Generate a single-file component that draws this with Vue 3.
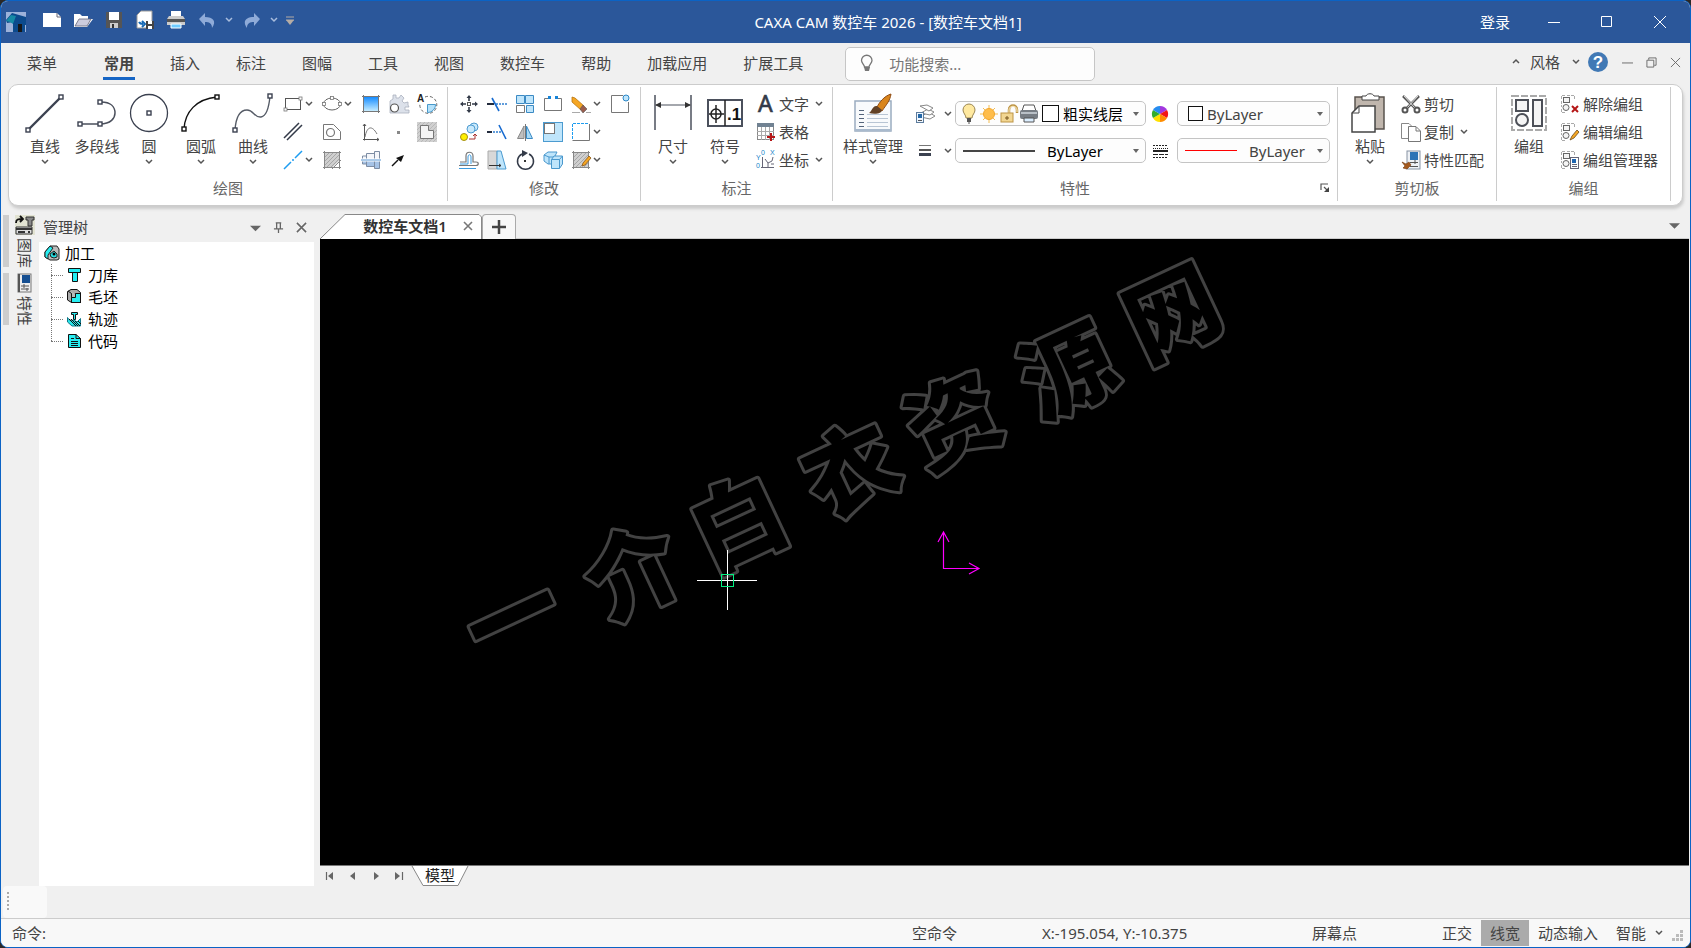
<script setup>
import { ref } from 'vue'

const activeTab = ref('常用')
const tabs = ['常用', '插入', '标注', '图幅', '工具', '视图', '数控车', '帮助', '加载应用', '扩展工具']
const search = ref('')

const dark = '#3b4150'
const sq = (x, y, c = dark) => `<rect x="${x - 2}" y="${y - 2}" width="4" height="4" fill="#fff" stroke="${c}" stroke-width="1.4"/>`

const groupFrame = `<path d="M5 1.500H1.500V5M7 1.500H13M1.500 7V13M1.500 15V18.500H5M11 1.500H14.500V5" fill="none" stroke="#aaa" stroke-dasharray="3 1"/><rect x="3.500" y="3.500" width="6" height="5" fill="#f4f4f4" stroke="#666"/><circle cx="6" cy="13.500" r="3" fill="#f4f4f4" stroke="#666"/>`
const hatch = `<rect x="3" y="3" width="14" height="14" fill="#cfcfcf"/><path d="M3 7L7 3M3 11L11 3M3 15L15 3M5 17L17 5M9 17L17 9M13 17L17 13" stroke="#a6a6a6"/><path d="M2.500 1V19M17.500 1V19M1 2.500H19M1 17.500H19" stroke="#888" fill="none"/>`

const icons = {
  line: `<path d="M3 37L36 4" stroke="${dark}" stroke-width="2.400"/>${sq(3, 37)}${sq(36, 4)}`,
  polyline: `<path d="M3 31H23C34 31 38 25 38 20C38 14 34 9 24 9" fill="none" stroke="#4b505c" stroke-width="1.500"/>${sq(3, 31)}${sq(23, 31)}${sq(23, 9)}`,
  circle: `<circle cx="20" cy="20" r="18.500" fill="none" stroke="${dark}" stroke-width="1.300"/>${sq(20, 20)}`,
  arc: `<path d="M3 36C4 19 15 6 36 4" fill="none" stroke="#111" stroke-width="1.400"/>${sq(3, 36, '#111')}${sq(36, 4, '#111')}`,
  curve: `<path d="M2 37C3 23 8 17 14 17C21 17 21 25 28 24C34 23 36 14 37 3" fill="none" stroke="#555b66" stroke-width="1.400"/>${sq(2, 37)}${sq(37, 3)}`,
  rect: `<rect x="2.500" y="4.500" width="15" height="11" fill="none" stroke="#555"/><rect x="1" y="14" width="3" height="3" fill="#fff" stroke="#777" stroke-width=".8"/><rect x="16" y="3" width="3" height="3" fill="#fff" stroke="#777" stroke-width=".8"/>`,
  parallel: `<path d="M1 16L16 1M4 18L19 3" stroke="#333a48" stroke-width="1.500"/>`,
  center: `<path d="M1 19L8 12M12 8L19 1" stroke="#1e9df0" stroke-width="1.500"/><circle cx="10" cy="10" r="1" fill="#1e9df0"/>`,
  ellipse: `<ellipse cx="10" cy="10" rx="8.500" ry="6" fill="none" stroke="#666"/><g fill="#fff" stroke="#777" stroke-width=".8"><rect x="8.500" y="2.500" width="3" height="3"/><rect x=".5" y="8.500" width="3" height="3"/><rect x="16.500" y="8.500" width="3" height="3"/></g>`,
  polygon: `<path d="M1.500 2.500H11.500L18.500 9.500V17.500H1.500Z" fill="none" stroke="#777"/><circle cx="8.500" cy="10.500" r="4" fill="none" stroke="#777" stroke-width="1.200"/>`,
  hatch: `${hatch}<path d="M11 17L17 11V17Z" fill="#fff"/><path d="M10 19L19 10" stroke="#888"/>`,
  gradient: `<defs><linearGradient id="blueFill" x1="0" y1="0" x2="0" y2="1"><stop stop-color="#168cff"/><stop offset="1" stop-color="#c5ecff"/></linearGradient></defs><rect x="3" y="3" width="14" height="14" fill="url(#blueFill)"/><path d="M2.500 1V19M17.500 1V19M1 2.500H19M1 17.500H19" stroke="#777" fill="none"/>`,
  axis: `<path d="M3.500 18.500V2M2 17.500H18M2 4L3.500 2L5 4M16 16L18 17.500L16 19" fill="none" stroke="#555"/><path d="M4 15C6 4 11 3 16 12" fill="none" stroke="#777"/>`,
  shaft: `<path d="M1.500 6H5.500V3.500H13.500V1.500H18.500V10H1.500Z" fill="#f4f6fa" stroke="#7c8ca3"/><path d="M1.500 10H18.500V18.500H13.500V16.500H5.500V14H1.500Z" fill="#a6c3e6" stroke="#7c8ca3"/><path d="M5.500 4V16M13.500 2V18" stroke="#7c8ca3"/><path d="M0 10H20" stroke="#fff" stroke-width="3"/><path d="M0 10H20" stroke="#5795d2"/>`,
  gear: `<path d="M4 5V1H7V4H10L12 1L15 4L13 7L15 9L19 8V11L20 13H16V16H20V19H1V7Z" fill="#dce1ea" stroke="#a9b0be" stroke-width=".8"/><circle cx="5.500" cy="14" r="4" fill="#fff" stroke="#555" stroke-width="1.200"/>`,
  point: `<rect x="8" y="9" width="3" height="3" fill="#888"/>`,
  arrow: `<path d="M3 16L9 10" stroke="#111" stroke-width="1.500"/><path d="M15 5L12 12L7 8Z" fill="#111"/>`,
  textcircle: `<path d="M8 3A8.500 8.500 0 1 1 3 9" fill="none" stroke="#666" stroke-dasharray="3 2"/><path d="M10.500 10.500H18.500C18.500 15 15 18.500 10.500 18.500Z" fill="#b5e1fa" stroke="#4798ca"/><text x="0" y="8" font-size="10" font-weight="700" font-family="Liberation Sans" fill="#222">A</text>`,
  region: `<rect width="20" height="20" fill="#d0d0d0"/><path d="M0 4L4 0M0 8L8 0M0 12L12 0M0 16L16 0M0 20L20 0M4 20L20 4M8 20L20 8M12 20L20 12M16 20L20 16" stroke="#b9b9b9"/><path d="M3.500 3.500H11.500V8.500H16.500V16.500H3.500Z" fill="#f5f5f5" stroke="#777"/>`,
  move: `<path d="M10 3V7M10 13V17M3 10H7M13 10H17" stroke="#333a48" stroke-width="1.600"/><path d="M10 1L12.500 4H7.500ZM10 19L12.500 16H7.500ZM1 10L4 7.500V12.500ZM19 10L16 7.500V12.500Z" fill="#333a48"/><rect x="8.500" y="8.500" width="3" height="3" fill="#fff" stroke="#555"/>`,
  trim: `<path d="M0 10H7" stroke="#222b3d" stroke-width="2"/><path d="M9 10H20" stroke="#2f7ed0" stroke-width="1.500" stroke-dasharray="2 1"/><path d="M5 4L12 17" stroke="#176bd0" stroke-width="1.600"/>`,
  extend: `<path d="M0 10H5" stroke="#222b3d" stroke-width="2"/><path d="M6 10H14" stroke="#2f7ed0" stroke-width="1.500" stroke-dasharray="2 1"/><path d="M12 3L19 17" stroke="#176bd0" stroke-width="1.600"/>`,
  array: `<g stroke="#3b8ac4"><path d="M1.500 1.500H9.500V9.500H1.500ZM10.500 1.500H18.500V9.500H10.500ZM11.500 11.500H18.500V18.500H11.500Z" fill="#bfe5fb"/><path d="M1.500 11.500H9.500V18.500H1.500Z" fill="#fff" stroke="#777"/></g>`,
  breakIt: `<path d="M5 4.500H1.500V16.500H18.500V4.500H15" fill="none" stroke="#777"/><rect x="5" y="2" width="3" height="3" fill="#1684d9"/><rect x="12" y="2" width="3" height="3" fill="#1684d9"/>`,
  eraser: `<path d="M1 3V8L10 16L13 12L4 4Z" fill="#f5a623" stroke="#b87512" stroke-width=".8"/><path d="M9 15L12 11L16 15L12 19Z" fill="#9a5d4d" stroke="#555" stroke-width=".6"/><path d="M1 18.500H9M15 18.500H20" stroke="#aaa"/>`,
  corner: `<path d="M13 1.500H1.500V18.500H18.500V8" fill="none" stroke="#777"/><circle cx="16" cy="4" r="3" fill="#bfe5fb" stroke="#2b87c8"/>`,
  copyObj: `<g fill="#c9e9fb" stroke="#4e9bd1"><circle cx="15" cy="5" r="4"/><circle cx="12" cy="7" r="4"/></g><circle cx="5" cy="15" r="3.500" fill="#fff000" stroke="#a58f13"/><path d="M10 17H16V13M14 14L16 12L18 14" stroke="#a33" fill="none"/>`,
  mirror: `<path d="M9 4V16.500H2.500Z" fill="#bfbfbf" stroke="#888"/><path d="M11.500 4V16.500H17.500Z" fill="#a8daf7" stroke="#3b8ac4"/><path d="M10.500 2V19" stroke="#777"/>`,
  scale: `<rect x=".5" y=".5" width="19" height="19" fill="#bfe5fb" stroke="#4c9bd0"/><rect x="1.500" y="1.500" width="10" height="10" fill="#fff" stroke="#777"/>`,
  stretch: `<path d="M18.500 2V18.500H1.500" fill="none" stroke="#777"/><path d="M1.500 17V1.500H18" fill="none" stroke="#1e9df0" stroke-dasharray="3 1"/>`,
  offset: `<path d="M0 15.500H17C20 15.500 20 12 17 12H14V6C14 1 7 1 7 6V12H1" fill="none" stroke="#777" stroke-width="1.200"/><path d="M0 18.500H17M1 14H9V7C9 4 12 4 12 7V14" fill="none" stroke="#3b9be0"/>`,
  chamfer: `<path d="M1 1H10V19H1Z" fill="#d8d8d8" stroke="#aaa"/><path d="M10 1H14L19 19H10Z" fill="#bfe5fb" stroke="#4c9bd0"/><path d="M2 15.500H14M12 14L14 15.500L12 17" stroke="#333" fill="none"/>`,
  rotate: `<path d="M7 4A8 8 0 1 0 14 4" fill="none" stroke="#333a48" stroke-width="1.500"/><path d="M7 0L13 3L7 7Z" fill="#333a48"/><rect x="9" y="10" width="2" height="2" fill="#333"/>`,
  block: `<g fill="#bfe5fb" stroke="#4a98cd"><path d="M1 5L5 2H14L12 6V14L5 14L1 11Z"/><path d="M1 5L6 7V14M6 7H12" fill="none"/><path d="M8.500 9.500L11 6H19.500V14L16.500 18.500H8.500Z"/><path d="M8.500 9.500H16.500V18.500M16.500 9.500L19.500 6" fill="none"/></g>`,
  editHatch: `${hatch}<path d="M12 13L18 6L20 8L14 15L11 16Z" fill="#f5a623" stroke="#8b5715" stroke-width=".8"/>`,
  dimension: `<path d="M2 2V37M38 2V37" stroke="#4b505c" stroke-width="1.500"/><path d="M3 12H37" stroke="#4b505c" stroke-width="1.200"/><path d="M2 12L8 9V15ZM38 12L32 9V15Z" fill="#333"/>`,
  symbol: `<rect x="3" y="7" width="34" height="26" fill="#fff" stroke="#4b505c" stroke-width="2"/><path d="M20 7V33M11 12V30M4 21H19" stroke="#222" stroke-width="1.500"/><circle cx="11" cy="21" r="5" fill="none" stroke="#222" stroke-width="1.500"/><text x="22" y="27" font-size="17" font-weight="700" font-family="Liberation Sans" fill="#111">.1</text>`,
  letter: `<text x="2" y="18" font-size="23" font-family="Noto Sans" fill="#333a48" stroke="#333a48" stroke-width=".6">A</text>`,
  table: `<rect x="1.500" y="1.500" width="16" height="16" fill="#fff" stroke="#888"/><path d="M1 1H18V5H1Z" fill="#718292"/><path d="M1 9.500H18M1 13.500H18M5.500 5V18M9.500 5V18M13.500 5V18" stroke="#aaa"/><path d="M15 11V19M11 15H19" stroke="#b51616" stroke-width="2"/>`,
  coord: `<path d="M6.500 7V18M5 17.500H18M9 9L12 13V17M17 7L16 11L12 13M15 14H18" fill="none" stroke="#667"/><g fill="#1684c9" font-size="7" font-family="Liberation Sans"><text x="0" y="10">Y</text><text x="5" y="5">0</text><text x="14" y="5">X</text><text x="0" y="18">0</text></g>`,
  style: `<rect x="2" y="8" width="36" height="30" fill="#f8fafc" stroke="#9aacc0" stroke-width="1.500"/><path d="M2 37H38" stroke="#a9bacd" stroke-width="2"/><g stroke="#54647b"><path d="M6 17.500H11M6 21.500H11M6 25.500H11M6 29.500H11M6 33.500H11"/><path d="M14 21.500H35M14 25.500H35M14 29.500H35M14 33.500H35" stroke="#b8c5d4"/></g><path d="M38 1C31 3 26 10 24 14L29 18C33 12 37 8 38 1Z" fill="#d9851c" stroke="#8f4c14"/><path d="M24 13C20 12 19 18 16 20C23 22 29 20 29 17Z" fill="#624126"/>`,
  layers: `<g fill="#fff" stroke="#888"><path d="M6 13L15 15L20 12L13 8Z"/><path d="M6 9L15 11L19 8L13 5Z"/><path d="M5 2L14 7L18 4L12 1Z"/></g><rect x="1.500" y="8.500" width="7" height="10" fill="#eef6ff" stroke="#5d7c9d"/><rect x="3" y="10" width="4" height="4" fill="#2467a7"/><path d="M3 16.500H7" stroke="#555"/>`,
  weights: `<path d="M4 4.500H16" stroke="#777"/><path d="M4 9H16" stroke="#555" stroke-width="2"/><path d="M4 13.500H16" stroke="#3b4150" stroke-width="3"/>`,
  patterns: `<g stroke="#222"><path d="M3 4.500H18" stroke-dasharray="2 1"/><path d="M3 7.500H18" stroke-dasharray="1 1"/><path d="M3 10H18" stroke-width="2"/><path d="M3 13.500H18" stroke-dasharray="5 1"/><path d="M3 16.500H18" stroke-dasharray="2 1"/></g>`,
  wheel: `<path d="M10 10V2A8 8 0 0 1 17 6Z" fill="#a138df"/><path d="M10 10L17 6A8 8 0 0 1 17 14Z" fill="#f21616"/><path d="M10 10L17 14A8 8 0 0 1 10 18Z" fill="#ff8d00"/><path d="M10 10V18A8 8 0 0 1 3 14Z" fill="#ffe000"/><path d="M10 10L3 14A8 8 0 0 1 3 6Z" fill="#32ad2c"/><path d="M10 10L3 6A8 8 0 0 1 10 2Z" fill="#268cf0"/>`,
  bulb: `<path d="M7 14C7 11 4 9 4 6A6 6 0 0 1 16 6C16 9 13 11 13 14Z" fill="#ffe9a0" stroke="#9a8550"/><path d="M8 15H12M8 17H12" stroke="#555" stroke-width="2"/><path d="M9 19H11" stroke="#555"/>`,
  sun: `<g stroke="#f5bd50"><path d="M10 1V19M1 10H19M4 4L16 16M16 4L4 16"/></g><circle cx="10" cy="10" r="5.500" fill="#ffbd4a" stroke="#f2a62b"/>`,
  lock: `<path d="M10 9V6C10 0 18 0 18 6V9" fill="none" stroke="#bd9445" stroke-width="2.500"/><path d="M10 9V6C10 1 18 1 18 6V8" fill="none" stroke="#fff1c7"/><rect x="2" y="9" width="12" height="9" fill="#f2d692" stroke="#bd9445"/><path d="M8 12V16M6 14H10" stroke="#76541c"/>`,
  printer: `<path d="M5 1H15L17 7H3Z" fill="#fff" stroke="#555"/><rect x="1" y="6" width="18" height="9" rx="2" fill="#777d84"/><path d="M2 8H18V10H2Z" fill="#b9c0c7"/><path d="M5 14H15V18H5Z" fill="#dbeeff" stroke="#555"/>`,
  paste: `<path d="M5 4H34V36H5Z" fill="#c0b6ad" stroke="#59534e" stroke-width="1.500"/><path d="M12 7V3H16C17 0 23 0 24 3H29V7Z" fill="#fff" stroke="#444"/><path d="M9 13H25V39H2V20Z" fill="#fff" stroke="#444" stroke-width="1.500"/><path d="M9 13V20H2" fill="none" stroke="#444"/>`,
  cut: `<path d="M2 2L14 14M18 2L6 14" stroke="#555" stroke-width="2.500"/><path d="M3 2L14 14M17 2L6 14" stroke="#fff" stroke-width=".8"/><circle cx="4" cy="16" r="2.500" fill="none" stroke="#555" stroke-width="2"/><circle cx="16" cy="16" r="2.500" fill="none" stroke="#555" stroke-width="2"/>`,
  copy: `<path d="M.5 1.500H8L11.500 5V16.500H.5Z" fill="#fff" stroke="#888"/><path d="M7.500 4.500H15L19.500 9V19.500H7.500Z" fill="#fff" stroke="#777"/><path d="M15 5V9H19" fill="none" stroke="#777"/>`,
  match: `<rect x="6" y="1" width="13" height="18" fill="#eef1f5" stroke="#8794a4"/><rect x="9" y="2" width="8" height="8" fill="#2b73b6"/><path d="M9 12.500H17M9 16.500H17M14 10V14" stroke="#555"/><path d="M1 12L5 14L8 12L10 15L6 19L2 18L4 16Z" fill="#a45a1f" stroke="#71380d" stroke-width=".6"/>`,
  group: `<rect x="3" y="3" width="34" height="34" fill="none" stroke="#aaa" stroke-width="2" stroke-dasharray="7 2"/><g fill="#f5f5f5" stroke="#4d5058" stroke-width="2"><rect x="7" y="7" width="12" height="11"/><rect x="24" y="7" width="9" height="26"/><circle cx="13" cy="27" r="6"/></g>`,
  ungroup: `${groupFrame}<path d="M12 12L18 18M18 12L12 18" stroke="#b51616" stroke-width="2"/>`,
  editGroup: `${groupFrame}<path d="M10 18L12 14L17 8L19 10L14 16Z" fill="#f5a623" stroke="#6b4a1a" stroke-width=".8"/>`,
  manageGroup: `${groupFrame}<rect x="10.500" y="7.500" width="8" height="11" fill="#fff" stroke="#667"/><rect x="12" y="9" width="4" height="4" fill="#1f65b0"/><path d="M12 14.500H17M12 16.500H17" stroke="#667"/>`,
  logo: `<rect width="20" height="20" fill="#9db2da"/><path d="M0 8L6 1L20 5V13H19V20H16V12H7V10L1 11Z" fill="#0c4a8c"/><path d="M0 9L5 3L10 4L7 12L4 10Z" fill="#168aa5"/><rect x="7" y="11" width="5" height="9" fill="#0c4a8c"/><rect x="12" y="12" width="4" height="8" fill="#181818"/>`,
  newDoc: `<path d="M1 3H15L19 7V17H1Z" fill="#fff"/><path d="M15 3V7H19" fill="none" stroke="#667"/>`,
  open: `<path d="M1 4H7L9 6H15V9H20L14 17H1Z" fill="#fff"/><path d="M2 16L6 9H18L14 16Z" fill="#ccd" stroke="#667" stroke-width=".8"/>`,
  save: `<path d="M2 2H18V18H2Z" fill="#555"/><rect x="5" y="2" width="10" height="8" fill="#fff"/><rect x="6" y="13" width="8" height="5" fill="#ccc"/><rect x="8" y="14" width="2" height="4" fill="#333"/>`,
  saveAs: `<path d="M6 1H17V18H2V5Z" fill="#fff" stroke="#999"/><path d="M4 12C5 14 6 14 8 14M7 11L10 14L7 17" fill="none" stroke="#1669b5" stroke-width="2"/><rect x="11" y="11" width="8" height="8" fill="#444"/><path d="M13 11H17V14H13ZM13 16H17V19H13Z" fill="#fff"/>`,
  print: `<path d="M5 1H15V7H5Z" fill="#fff"/><path d="M3 6H17L19 9V15H1V9Z" fill="#ccc"/><path d="M1 9H19V12H1Z" fill="#555"/><path d="M5 14H15V18H5Z" fill="#6ecbff" stroke="#fff"/>`,
  undo: `<path d="M2 9L8 3V7C16 7 20 11 15 18C15 13 12 12 8 12V16Z" fill="#8fabd8"/>`,
  redo: `<path d="M18 9L12 3V7C4 7 0 11 5 18C5 13 8 12 12 12V16Z" fill="#8fabd8"/>`,
  library: `<rect width="20" height="20" fill="#e2e3d2"/><path d="M1 8C1 4 3 4 8 4M5 1L8 4L5 7" fill="none" stroke="#111" stroke-width="1.800"/><path d="M11 2H19V5H17V11H13V5H11Z" fill="#888" stroke="#333"/><path d="M1 12H17V19H1Z" fill="#ddd" stroke="#333"/><path d="M1 14H17M3 17H10M13 17H15" stroke="#333" stroke-width="2"/>`,
  props: `<rect x="3" y="1" width="13" height="18" fill="#eee" stroke="#777"/><path d="M4 1V19" stroke="#555" stroke-width="2"/><rect x="7" y="2" width="8" height="8" fill="#164f91"/><path d="M6 13H14M6 16H14M9 11V15M12 15V18" stroke="#555"/>`,
  part: `<path d="M1 7L6 1H13L15 4V14L13 15H6L1 12Z" fill="#bbb" stroke="#222"/><path d="M1 7L6 1L9 3L4 10V14L1 12Z" fill="#28eef1" stroke="#222"/><path d="M6 9L10 6L13 9V12L10 13L7 12Z" fill="#27dfe3" stroke="#222"/><circle cx="10" cy="9" r="1.500"/>`,
  tool: `<path d="M1.500 1.500H13.500V5.500H10.500V14.500H5.500V5.500H1.500Z" fill="#21eef3" stroke="#111"/><path d="M5 5.500H11" stroke="#111"/>`,
  stock: `<path d="M.5 2.500L4 .5H10L13.500 3.500V13.500H4.500L.5 11Z" fill="#aaa" stroke="#111"/><rect x="4.500" y="4.500" width="9" height="9" fill="#27eef2" stroke="#111"/><path d="M1 2L4.500 4.500V8.500H8.500V4.500" stroke="#111" fill="#bbb"/>`,
  path: `<path d="M4.500 1.500H10.500V3.500H8.500V8.500H6.500V3.500H4.500Z" fill="#29e8ec" stroke="#111"/><path d="M.5 6.500C2 9 3 10 7 9L10 11L13.500 7.500V15H5L.5 11Z" fill="#29e8ec" stroke="#178"/><path d="M2 8L9 15M4 8L11 15M8 10L13 15M11 10L14 13" stroke="#111"/>`,
  code: `<path d="M1.500 1.500H9L13.500 5.500V14.500H1.500Z" fill="#28eef2" stroke="#111"/><path d="M9 1.500V5.500H13.500M4 5.500H7M4 8.500H11M4 10.500H11M4 12.500H11" stroke="#111" fill="none"/>`
}

const drawLarge = [
  { t: '直线', i: 'line', more: true },
  { t: '多段线', i: 'polyline' },
  { t: '圆', i: 'circle', more: true },
  { t: '圆弧', i: 'arc', more: true },
  { t: '曲线', i: 'curve', more: true }
]
const drawSmall = [
  ['rect', '矩形', true], ['ellipse', '椭圆', true], ['gradient', '填充'], ['gear', '齿轮'], ['textcircle', '放大'],
  ['parallel', '平行线'], ['polygon', '孔'], ['axis', '公式曲线'], ['point', '点'], ['region', '轮廓'],
  ['center', '中心线', true], ['hatch', '剖面线'], ['shaft', '轴'], ['arrow', '箭头']
]
const modifySmall = [
  ['move', '平移'], ['trim', '裁剪'], ['array', '阵列'], ['breakIt', '打断'], ['eraser', '删除', true], ['corner', '过渡'],
  ['copyObj', '平移复制'], ['extend', '延伸'], ['mirror', '镜像'], ['scale', '缩放'], ['stretch', '拉伸', true], null,
  ['offset', '等距'], ['chamfer', '倒角'], ['rotate', '旋转'], ['block', '分解'], ['editHatch', '编辑剖面', true]
]
const tree = [['刀库', 'tool'], ['毛坯', 'stock'], ['轨迹', 'path'], ['代码', 'code']]

// Centre of each watermark character on the drawing sheet
const watermark = [
  ['一', 192, 377], ['介', 313, 332], ['白', 418, 283], ['衣', 530, 230],
  ['资', 633, 181], ['源', 747, 131], ['网', 852, 73]
]
</script>

<template>
  <div class="window">
    <header class="titlebar">
      <div class="quick">
        <svg class="i20 logo" viewBox="0 0 20 20" v-html="icons.logo" />
        <button v-for="n in ['newDoc', 'open', 'save', 'saveAs', 'print']" :key="n" :aria-label="n"><svg class="i20" viewBox="0 0 20 20" v-html="icons[n]" /></button>
        <button aria-label="undo"><svg class="i20" viewBox="0 0 20 20" v-html="icons.undo" /></button>
        <button class="drop" aria-label="undo list"><svg class="chev" viewBox="0 0 8 6"><path d="M1 1L4 4L7 1" /></svg></button>
        <button aria-label="redo"><svg class="i20" viewBox="0 0 20 20" v-html="icons.redo" /></button>
        <button class="drop" aria-label="redo list"><svg class="chev" viewBox="0 0 8 6"><path d="M1 1L4 4L7 1" /></svg></button>
        <button class="drop last" aria-label="customize"><svg class="custom" viewBox="0 0 8 9"><path d="M0 1H8M0 4H8" stroke="#b5aca5" /><path d="M0 4H8L4 9Z" fill="#b5aca5" /></svg></button>
      </div>
      <h1>CAXA CAM 数控车 2026 - [数控车文档1]</h1>
      <div class="wincontrols">
        <button class="login">登录</button>
        <button aria-label="minimize"><svg viewBox="0 0 12 12"><path d="M0 6.500H12" /></svg></button>
        <button aria-label="maximize"><svg viewBox="0 0 12 12"><path d="M.5 .5H10.500V10.500H.5Z" /></svg></button>
        <button aria-label="close"><svg viewBox="0 0 12 12"><path d="M0 0L12 12M12 0L0 12" /></svg></button>
      </div>
    </header>

    <nav class="tabs">
      <button class="menu">菜单</button>
      <button v-for="t in tabs" :key="t" :class="{ active: t === activeTab }" @click="activeTab = t">{{ t }}</button>
      <label class="search">
        <svg viewBox="0 0 14 18"><path d="M4.500 12C4.500 10 1.500 8 1.500 5.500A5 5 0 0 1 12 5.500C12 8 9 10 9 12Z" fill="none" stroke="#777" stroke-width="1.300" /><path d="M4 12H10L9 16H5Z" fill="#777" /></svg>
        <input v-model="search" type="text" placeholder="功能搜索..." aria-label="功能搜索" />
      </label>
      <div class="tabright">
        <button aria-label="collapse"><svg class="chev" viewBox="0 0 8 6"><path d="M1 4L4 1L7 4" /></svg></button>
        <button class="skin">风格<svg class="chev" viewBox="0 0 8 6"><path d="M1 1L4 4L7 1" /></svg></button>
        <button aria-label="help" class="help"><svg viewBox="0 0 20 20"><circle cx="10" cy="10" r="10" fill="#4179b5" /><text x="10" y="16" text-anchor="middle" font-size="17" font-weight="700" font-family="Liberation Sans" fill="#fff">?</text></svg></button>
        <button class="mdi" aria-label="minimize document"><svg viewBox="0 0 12 12"><path d="M0 6.500H12" /></svg></button>
        <button class="mdi" aria-label="restore document"><svg viewBox="0 0 12 12"><path d="M1 3.500H8.500V11H1ZM3 3V1H11V9H9" /></svg></button>
        <button class="mdi" aria-label="close document"><svg viewBox="0 0 12 12"><path d="M1 1L11 11M11 1L1 11" /></svg></button>
      </div>
    </nav>

    <main class="ribbon">
      <section class="group draw">
        <div class="gbody">
          <button v-for="b in drawLarge" :key="b.t" class="large">
            <svg class="i40" viewBox="0 0 40 40" v-html="icons[b.i]" /><span>{{ b.t }}</span>
            <svg v-if="b.more" class="chev" viewBox="0 0 8 6"><path d="M1 1L4 4L7 1" /></svg>
          </button>
          <div class="smalls">
            <button v-for="b in drawSmall" :key="b[0]" :aria-label="b[1]">
              <svg class="i20" viewBox="0 0 20 20" v-html="icons[b[0]]" /><svg v-if="b[2]" class="chev" viewBox="0 0 8 6"><path d="M1 1L4 4L7 1" /></svg>
            </button>
          </div>
        </div>
        <footer>绘图</footer>
      </section>

      <section class="group modify">
        <div class="gbody">
          <div class="smalls">
            <template v-for="(b, k) in modifySmall" :key="k">
              <button v-if="b" :aria-label="b[1]">
                <svg class="i20" viewBox="0 0 20 20" v-html="icons[b[0]]" /><svg v-if="b[2]" class="chev" viewBox="0 0 8 6"><path d="M1 1L4 4L7 1" /></svg>
              </button>
              <i v-else />
            </template>
          </div>
        </div>
        <footer>修改</footer>
      </section>

      <section class="group annotate">
        <div class="gbody">
          <button v-for="b in [['尺寸', 'dimension'], ['符号', 'symbol']]" :key="b[0]" class="large">
            <svg class="i40" viewBox="0 0 40 40" v-html="icons[b[1]]" /><span>{{ b[0] }}</span>
            <svg class="chev" viewBox="0 0 8 6"><path d="M1 1L4 4L7 1" /></svg>
          </button>
          <div class="rows">
            <button v-for="b in [['文字', 'letter', true], ['表格', 'table'], ['坐标', 'coord', true]]" :key="b[0]">
              <svg class="i20" viewBox="0 0 20 20" v-html="icons[b[1]]" /><span>{{ b[0] }}</span><svg v-if="b[2]" class="chev" viewBox="0 0 8 6"><path d="M1 1L4 4L7 1" /></svg>
            </button>
          </div>
        </div>
        <footer>标注</footer>
      </section>

      <section class="group properties">
        <div class="gbody">
          <button class="large wide">
            <svg class="i40" viewBox="0 0 40 40" v-html="icons.style" /><span>样式管理</span>
            <svg class="chev" viewBox="0 0 8 6"><path d="M1 1L4 4L7 1" /></svg>
          </button>
          <div class="props">
            <button class="pick" aria-label="图层"><svg class="i20" viewBox="0 0 20 20" v-html="icons.layers" /><svg class="chev" viewBox="0 0 8 6"><path d="M1 1L4 4L7 1" /></svg></button>
            <label class="combo layer">
              <svg v-for="n in ['bulb', 'sun', 'lock', 'printer']" :key="n" class="i20" viewBox="0 0 20 20" v-html="icons[n]" />
              <b class="swatch" />
              <select aria-label="当前图层"><option>粗实线层</option></select>
              <svg class="tri" viewBox="0 0 6 4"><path d="M0 0H6L3 4Z" /></svg>
            </label>
            <button class="mid" aria-label="颜色"><svg class="i20" viewBox="0 0 20 20" v-html="icons.wheel" /></button>
            <label class="combo color">
              <b class="swatch small" />
              <select aria-label="当前颜色"><option>ByLayer</option></select>
              <svg class="tri" viewBox="0 0 6 4"><path d="M0 0H6L3 4Z" /></svg>
            </label>
            <button class="pick" aria-label="线宽"><svg class="i20" viewBox="0 0 20 20" v-html="icons.weights" /><svg class="chev" viewBox="0 0 8 6"><path d="M1 1L4 4L7 1" /></svg></button>
            <label class="combo weight">
              <b class="stroke" />
              <select aria-label="当前线宽"><option>ByLayer</option></select>
              <svg class="tri" viewBox="0 0 6 4"><path d="M0 0H6L3 4Z" /></svg>
            </label>
            <button class="mid" aria-label="线型"><svg class="i20" viewBox="0 0 20 20" v-html="icons.patterns" /></button>
            <label class="combo linetype">
              <b class="stroke red" />
              <select aria-label="当前线型"><option>ByLayer</option></select>
              <svg class="tri" viewBox="0 0 6 4"><path d="M0 0H6L3 4Z" /></svg>
            </label>
          </div>
        </div>
        <footer>特性<button class="launcher" aria-label="特性设置"><svg viewBox="0 0 10 10"><path d="M1 7V1H8M4 4L8 8" fill="none" stroke="#555" stroke-width="1.200" /><path d="M9 4V9H4Z" fill="#444" /></svg></button></footer>
      </section>

      <section class="group clipboard">
        <div class="gbody">
          <button class="large">
            <svg class="i40" viewBox="0 0 40 40" v-html="icons.paste" /><span>粘贴</span>
            <svg class="chev" viewBox="0 0 8 6"><path d="M1 1L4 4L7 1" /></svg>
          </button>
          <div class="rows">
            <button v-for="b in [['剪切', 'cut'], ['复制', 'copy', true], ['特性匹配', 'match']]" :key="b[0]">
              <svg class="i20" viewBox="0 0 20 20" v-html="icons[b[1]]" /><span>{{ b[0] }}</span><svg v-if="b[2]" class="chev" viewBox="0 0 8 6"><path d="M1 1L4 4L7 1" /></svg>
            </button>
          </div>
        </div>
        <footer>剪切板</footer>
      </section>

      <section class="group grouping">
        <div class="gbody">
          <button class="large"><svg class="i40" viewBox="0 0 40 40" v-html="icons.group" /><span>编组</span></button>
          <div class="rows">
            <button v-for="b in [['解除编组', 'ungroup'], ['编辑编组', 'editGroup'], ['编组管理器', 'manageGroup']]" :key="b[0]">
              <svg class="i20" viewBox="0 0 20 20" v-html="icons[b[1]]" /><span>{{ b[0] }}</span>
            </button>
          </div>
        </div>
        <footer>编组</footer>
      </section>
    </main>

    <div class="work">
      <aside class="dock">
        <button><svg class="i20" viewBox="0 0 20 20" v-html="icons.library" /><span>图库</span></button>
        <button><svg class="i20" viewBox="0 0 20 20" v-html="icons.props" /><span>特性</span></button>
      </aside>
      <section class="panel">
        <header>
          <h2>管理树</h2>
          <button aria-label="options"><svg viewBox="0 0 12 12"><path d="M0 4H12L6 10Z" fill="#666" /></svg></button>
          <button aria-label="pin"><svg viewBox="0 0 12 12"><path d="M3 1H9M4 1V7M8 1V7M1 7.500H11M6 8V12" stroke="#666" stroke-width="1.400" fill="none" /></svg></button>
          <button aria-label="close panel"><svg viewBox="0 0 12 12"><path d="M1 1L11 11M11 1L1 11" stroke="#666" stroke-width="1.700" /></svg></button>
        </header>
        <ul class="tree">
          <li class="root"><svg viewBox="0 0 16 16" v-html="icons.part" />加工
            <ul>
              <li v-for="n in tree" :key="n[0]"><svg viewBox="0 0 16 16" v-html="icons[n[1]]" />{{ n[0] }}</li>
            </ul>
          </li>
        </ul>
      </section>
      <section class="document">
        <div class="doctabs">
          <button class="doctab">
            <svg class="shape" viewBox="0 0 162 26" preserveAspectRatio="none"><path d="M0 26L25 1.500H159L161.500 4V26" fill="#fff" stroke="#888" /></svg>
            <span>数控车文档1</span>
          </button>
          <button class="closedoc" aria-label="close tab"><svg viewBox="0 0 10 10"><path d="M1 1L9 9M9 1L1 9" stroke="#777" stroke-width="1.600" /></svg></button>
          <button class="adddoc" aria-label="new tab"><svg viewBox="0 0 16 16"><path d="M8 1V15M1 8H15" stroke="#444" stroke-width="2.500" /></svg></button>
          <button class="doclist" aria-label="document list"><svg viewBox="0 0 12 6"><path d="M0 0H12L6 6Z" fill="#666" /></svg></button>
        </div>
        <div class="canvas">
          <svg class="watermark">
            <text v-for="[c, x, y] in watermark" :key="c" :transform="`translate(${x} ${y}) rotate(-25)`" y="35">{{ c }}</text>
          </svg>
          <svg class="ucs" viewBox="0 0 46 46"><path d="M7.500 43V7M2 16L7.500 6L13 16M7 42.500H43M33 37L43 42.500L33 48" fill="none" stroke="#f0f" stroke-width="1.200" /></svg>
          <svg class="cross" viewBox="0 0 60 60"><path d="M0 30.500H60M30.500 0V60" stroke="#fff" /><rect x="24.500" y="24.500" width="12" height="12" fill="none" stroke="#00f080" /></svg>
        </div>
        <div class="layouts">
          <button aria-label="first"><svg viewBox="0 0 10 10"><path d="M1.500 1V9" stroke="#666" stroke-width="1.200" /><path d="M8 1V9L3 5Z" /></svg></button>
          <button aria-label="previous"><svg viewBox="0 0 10 10"><path d="M7 1V9L2 5Z" /></svg></button>
          <button aria-label="next"><svg viewBox="0 0 10 10"><path d="M3 1V9L8 5Z" /></svg></button>
          <button aria-label="last"><svg viewBox="0 0 10 10"><path d="M8.500 1V9" stroke="#666" stroke-width="1.200" /><path d="M1 1V9L6 5Z" /></svg></button>
          <button class="model"><svg viewBox="0 0 56 20" preserveAspectRatio="none"><path d="M0 0L11 19.500H46L56 0" fill="#fff" stroke="#888" /></svg><span>模型</span></button>
        </div>
      </section>
    </div>

    <div class="cmdbar"><div class="grip"><i v-for="n in 5" :key="n" /></div></div>
    <footer class="status">
      <span class="prompt">命令:</span>
      <span class="cmd">空命令</span>
      <span class="coords">X:-195.054, Y:-10.375</span>
      <span class="snap">屏幕点</span>
      <button>正交</button>
      <button class="on">线宽</button>
      <button>动态输入</button>
      <button class="smart">智能<svg class="chev" viewBox="0 0 8 6"><path d="M1 1L4 4L7 1" /></svg></button>
      <svg class="sizer" viewBox="0 0 12 12"><path d="M8 0H11V3H8ZM4 4H7V7H4ZM8 4H11V7H8ZM0 8H3V11H0ZM4 8H7V11H4ZM8 8H11V11H8Z" fill="#bbb" /></svg>
    </footer>
  </div>
</template>

<style>
html { background: #2b2826; }
body { margin: 0; }
</style>

<style scoped>
.window {
  box-sizing: border-box;
  display: flex;
  flex-direction: column;
  min-height: 100vh;
  overflow: hidden;
  border: 1px solid #0b63c5;
  border-radius: 8px;
  background: #f0f0f0;
  color: #444;
  font: 15px/20px "Noto Sans", "Noto Sans CJK SC", sans-serif;
}
button {
  display: flex;
  align-items: center;
  justify-content: center;
  padding: 0;
  border: 0;
  background: none;
  color: inherit;
  font: inherit;
  white-space: nowrap;
}
svg { display: block; flex: none; overflow: visible; }
.i20 { width: 20px; height: 20px; }
.i40 { width: 40px; height: 40px; }
.chev { width: 8px; height: 6px; fill: none; stroke: #555; stroke-width: 1.5; }

.titlebar { display: flex; align-items: center; height: 42px; background: #2b579a; color: #fff; }
.quick { display: flex; align-items: center; width: 299px; height: 38px; align-self: flex-start; }
.quick .logo { margin: 4px 10px 0 5px; }
.quick button { width: 31px; height: 28px; }
.quick .drop { width: 14px; }
.quick .drop .chev { stroke: #a9bddd; }
.quick .last { margin-left: 2px; }
.custom { width: 8px; height: 9px; }
h1 { flex: 1; margin: 0; font: inherit; text-align: center; }
.wincontrols { display: flex; width: 214px; height: 100%; }
.wincontrols button { width: 53px; }
.wincontrols .login { width: 51px; padding-right: 13px; }
.wincontrols svg { width: 12px; height: 12px; fill: none; stroke: #fff; }

.tabs { display: flex; height: 41px; }
.tabs > button { position: relative; padding: 0 18px; height: 39px; }
.tabs > .menu { padding: 0 29px 0 26px; }
.tabs > .active { font-weight: 700; }
.tabs > .active::after { content: ""; position: absolute; left: 17px; right: 17px; bottom: 2px; height: 3px; background: #1565c5; }
.search { box-sizing: border-box; display: flex; align-items: center; width: 250px; height: 34px; margin: 4px 0 0 24px; padding: 0 14px; border: 1px solid #c6c6c6; border-radius: 5px; background: #fdfdfd; }
.search svg { width: 14px; height: 18px; }
.search input { flex: 1; min-width: 0; margin-left: 15px; padding: 0; border: 0; outline: 0; background: none; color: #444; font: inherit; }
.search input::placeholder { color: #777; opacity: 1; }
.tabright { display: flex; align-items: center; height: 38px; margin-left: auto; padding-right: 3px; }
.skin { gap: 12px; margin: 0 8px 0 10px; }
.help svg { width: 20px; height: 20px; }
.mdi { width: 24px; }
.mdi:nth-last-child(3) { margin-left: 7px; }
.mdi svg { width: 11px; height: 11px; fill: none; stroke: #666; }

.ribbon { display: flex; height: 120px; margin: 0 7px; border: 1px solid #ccc; border-radius: 10px; background: #fff; box-shadow: 1px 3px 3px #ccc; }
.group { box-sizing: border-box; display: flex; flex-direction: column; margin: 2px 0 4px; border-right: 1px solid #ccc; }
.draw { width: 439px; }
.modify { width: 193px; }
.annotate { width: 192px; }
.properties { width: 505px; }
.clipboard { width: 159px; }
.grouping { width: 174px; }
.gbody { display: flex; height: 91px; padding: 3px 0 0 6px; box-sizing: border-box; }
.draw .gbody { padding-left: 10px; }
.modify .gbody { padding-left: 11px; }
.group footer { position: relative; color: #666; text-align: center; height: 20px; }
.large { flex-direction: column; justify-content: flex-start; width: 52px; padding-top: 3px; }
.large span { margin: 3px 0; line-height: 20px; }
.wide { width: 68px; }
.smalls { display: grid; grid-template-rows: repeat(3, 28px); }
.smalls button { justify-content: flex-start; gap: 2px; }
.draw .smalls { margin-left: 4px; grid-template-columns: 39px 39px 28px 28px 28px; }
.modify .smalls { grid-template-columns: 28px 28px 28px 28px 39px 20px; }
.rows { display: grid; grid-template-rows: repeat(3, 28px); margin-left: 5px; justify-items: start; }
.rows span { margin: 0 6px 0 3px; }
.props { display: grid; grid-template-columns: 40px 191px 31px 153px; grid-template-rows: 25px 25px; row-gap: 12px; margin: 11px 0 0 8px; }
.pick { justify-content: flex-start; gap: 9px; }
.mid { justify-content: flex-start; padding-left: 4px; }
.combo { box-sizing: border-box; position: relative; display: flex; align-items: center; border: 1px solid #c4c4c4; border-radius: 5px; background: #fdfdfd; padding: 0 6px 0 3px; }
.combo select { appearance: none; flex: 1; min-width: 0; padding: 0; border: 0; outline: 0; background: none; color: #444; font: inherit; }
.layer select, .weight select { color: #000; }
.combo .tri { width: 6px; height: 4px; fill: #666; }
.swatch { box-sizing: border-box; flex: none; width: 17px; height: 17px; margin: 0 4px 0 3px; border: 1px solid #111; background: #fff; }
.color .swatch { width: 15px; height: 15px; margin-left: 7px; }
.stroke { flex: none; width: 72px; height: 2px; margin: 0 12px 0 4px; background: #444; }
.linetype .red { width: 52px; height: 1px; background: #f00; }
.launcher { position: absolute; right: 7px; top: 5px; }
.launcher svg { width: 10px; height: 10px; }
.properties footer { padding-right: 20px; }

.work { flex: 1; display: flex; min-height: 0; }
.dock { width: 38px; padding: 9px 0 0 2px; box-sizing: border-box; }
.dock button { flex-direction: column; justify-content: flex-start; width: 32px; height: 52px; margin-bottom: 6px; padding-left: 6px; border-left: 6px solid #cdcdcd; }
.dock span { margin-top: 8px; transform: rotate(90deg); }
.panel { display: flex; flex-direction: column; width: 275px; }
.panel header { display: flex; height: 36px; align-items: center; padding-right: 1px; }
.panel h2 { flex: 1; margin: 5px 0 0 4px; font: inherit; }
.panel header button { width: 23px; margin-top: 6px; }
.panel header svg { width: 11px; height: 11px; }
.tree, .tree ul { list-style: none; margin: 0; padding: 0; color: #000; line-height: 22px; }
.tree { flex: 1; background: #fff; padding-left: 5px; }
.tree svg { display: inline-block; width: 16px; height: 16px; margin-right: 5px; vertical-align: -2px; }
.tree ul { position: relative; margin-left: 7px; }
.tree ul::before { content: ""; position: absolute; left: 0; top: 0; height: 77px; border-left: 1px dotted #777; }
.tree ul li::before { content: ""; display: inline-block; width: 12px; margin: 0 4px 0 0; border-top: 1px dotted #777; vertical-align: 5px; }

.document { flex: 1; display: flex; flex-direction: column; min-width: 0; margin: 0 1px 0 6px; }
.doctabs { display: flex; height: 26px; margin-top: 7px; border-bottom: 1px solid #ccc; box-sizing: border-box; }
.doctab { position: relative; width: 162px; height: 26px; color: #333; }
.doctab .shape { position: absolute; inset: 0; width: 100%; height: 100%; }
.doctab span { position: relative; margin-left: 8px; font-weight: 600; }
.closedoc { position: relative; width: 20px; margin-left: -24px; }
.closedoc svg { width: 10px; height: 10px; }
.adddoc { width: 34px; height: 25px; margin: 1px 0 0 4px; border: 1px solid #aaa; border-bottom: 0; border-radius: 4px 4px 0 0; background: #f8f8f8; }
.adddoc svg { width: 16px; height: 16px; }
.doclist { margin: 0 9px 0 auto; }
.doclist svg { width: 11px; height: 6px; }
.canvas { flex: 1; position: relative; overflow: hidden; background: #000; border-bottom: 1px solid #777; }
.watermark { position: absolute; inset: 0; width: 100%; height: 100%; }
.watermark text { font: 900 92px "Noto Sans CJK SC", sans-serif; text-anchor: middle; fill: #000; stroke: #424242; stroke-width: 6px; stroke-linejoin: round; paint-order: stroke; }
.ucs { position: absolute; left: 616px; top: 287px; width: 46px; height: 46px; }
.cross { position: absolute; left: 377px; top: 311px; width: 60px; height: 60px; }
.layouts { display: flex; align-items: center; height: 20px; padding-left: 4px; }
.layouts button { width: 12px; margin-right: 11px; }
.layouts button svg { width: 10px; height: 10px; fill: #666; }
.layouts .model { position: relative; width: 56px; height: 20px; margin: 0 0 0 -4px; color: #222; line-height: 18px; align-items: flex-start; }
.layouts .model svg { position: absolute; inset: 0; width: 56px; height: 20px; }
.model span { position: relative; }

.cmdbar { height: 32px; padding-left: 2px; }
.grip { box-sizing: border-box; display: flex; flex-direction: column; gap: 2px; width: 44px; height: 32px; padding: 6px 4px; border-radius: 4px; background: #f9f9f9; }
.grip i { width: 2px; height: 2px; background: #aaa; }
.status { display: flex; align-items: center; height: 28px; border-top: 1px solid #ccc; background: #f8f8f8; }
.prompt { flex: 1; padding-left: 11px; }
.cmd { width: 130px; }
.coords { width: 270px; }
.snap { width: 121px; }
.status button { height: 26px; padding: 0 9px; }
.status .on { background: #ababab; }
.status .smart { gap: 9px; padding: 0 9px; }
.sizer { width: 12px; height: 12px; margin: 6px 6px 0 0; }
</style>
